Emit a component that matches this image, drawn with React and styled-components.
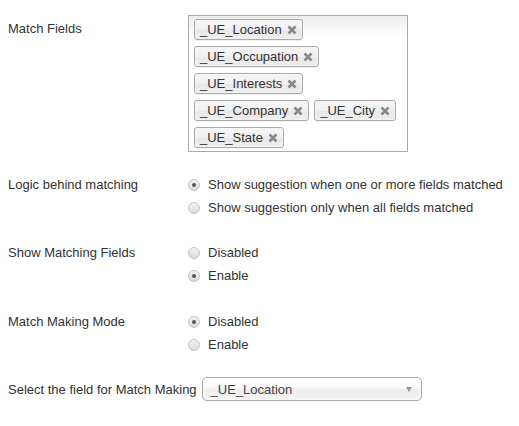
import React from 'react';
import styled, { createGlobalStyle } from 'styled-components';

const GlobalStyle = createGlobalStyle`
  html, body {
    margin: 0;
    padding: 0;
    background: #fff;
  }
  body {
    font-family: "Liberation Sans", Arial, sans-serif;
    font-size: 13px;
    color: #333;
  }
`;

const fields = ['_UE_Location', '_UE_Occupation', '_UE_Interests', '_UE_Company', '_UE_City', '_UE_State'];

const App = () => {
  return (
    <>
      <GlobalStyle />
      <Page>
        <Row $gap={21}>
          <Label $top={2}>Match Fields</Label>
          <Choices>
            {fields.map((f) => (
              <Choice key={f}>
                <span>{f}</span>
                <CloseIcon viewBox="0 0 10 10">
                  <path d="M1.5 1.5 L8.5 8.5 M8.5 1.5 L1.5 8.5" />
                </CloseIcon>
              </Choice>
            ))}
          </Choices>
        </Row>

        <Row $gap={22}>
          <Label>Logic behind matching</Label>
          <Options>
            <Option>
              <Radio $checked />
              Show suggestion when one or more fields matched
            </Option>
            <Option>
              <Radio />
              Show suggestion only when all fields matched
            </Option>
          </Options>
        </Row>

        <Row $gap={23}>
          <Label>Show Matching Fields</Label>
          <Options>
            <Option>
              <Radio />
              Disabled
            </Option>
            <Option>
              <Radio $checked />
              Enable
            </Option>
          </Options>
        </Row>

        <Row $gap={21}>
          <Label>Match Making Mode</Label>
          <Options>
            <Option>
              <Radio $checked />
              Disabled
            </Option>
            <Option>
              <Radio />
              Enable
            </Option>
          </Options>
        </Row>

        <InlineRow>
          <InlineLabel>Select the field for Match Making</InlineLabel>
          <Select>
            <span>_UE_Location</span>
            <Arrow />
          </Select>
        </InlineRow>
      </Page>
    </>
  );
};

const Page = styled.div`
  padding: 15px 8px 0 8px;
`;

const Row = styled.div`
  display: grid;
  grid-template-columns: 180px 1fr;
  align-items: start;
  margin-bottom: ${(p) => p.$gap}px;
`;

const Label = styled.div`
  line-height: 23px;
  padding-top: ${(p) => p.$top || 0}px;
  white-space: nowrap;
`;

const Choices = styled.ul`
  width: 220px;
  box-sizing: border-box;
  margin: 0;
  padding: 0 5px;
  list-style: none;
  display: flex;
  flex-wrap: wrap;
  align-content: flex-start;
  border: 1px solid #aaa;
  background: linear-gradient(#eee 1%, #fff 15%);
  min-height: 137px;
`;

const Choice = styled.li`
  position: relative;
  margin: 3px 5px 3px 0;
  padding: 3px 20px 3px 5px;
  line-height: 13px;
  border: 1px solid #aaa;
  border-radius: 3px;
  background: linear-gradient(#f4f4f4 20%, #f0f0f0 50%, #e8e8e8 52%, #eee 100%);
  box-shadow: 0 0 2px #fff inset, 0 1px 0 rgba(0, 0, 0, 0.05);
  color: #333;
  white-space: nowrap;
`;

const CloseIcon = styled.svg`
  position: absolute;
  top: 5px;
  right: 5px;
  width: 10px;
  height: 10px;
  stroke: #888;
  stroke-width: 2.6;
  fill: none;
`;

const Options = styled.div`
  display: flex;
  flex-direction: column;
`;

const Option = styled.label`
  display: flex;
  align-items: center;
  height: 23px;
  line-height: 23px;
  white-space: nowrap;
`;

const Radio = styled.span`
  position: relative;
  display: inline-block;
  box-sizing: border-box;
  width: 12px;
  height: 12px;
  margin-right: 8px;
  border-radius: 50%;
  border: 1px solid #c4c4c4;
  background: linear-gradient(#f2f2f2, #dcdcdc);
  &::after {
    content: '';
    display: ${(p) => (p.$checked ? 'block' : 'none')};
    position: absolute;
    left: 3px;
    top: 3px;
    width: 4px;
    height: 4px;
    border-radius: 50%;
    background: #555;
  }
`;

const InlineRow = styled.div`
  display: flex;
  align-items: center;
`;

const InlineLabel = styled.span`
  margin-right: 5px;
  white-space: nowrap;
`;

const Select = styled.div`
  position: relative;
  box-sizing: border-box;
  width: 220px;
  height: 24px;
  line-height: 23px;
  padding-left: 8px;
  border: 1px solid #aaa;
  border-radius: 5px;
  background: linear-gradient(#fff 20%, #f6f6f6 50%, #eee 52%, #f4f4f4 100%);
  box-shadow: 0 0 3px #fff inset, 0 1px 1px rgba(0, 0, 0, 0.1);
  color: #444;
`;

const Arrow = styled.span`
  position: absolute;
  right: 9px;
  top: 9px;
  width: 0;
  height: 0;
  border-left: 3.5px solid transparent;
  border-right: 3.5px solid transparent;
  border-top: 5px solid #999;
`;

export default App;
